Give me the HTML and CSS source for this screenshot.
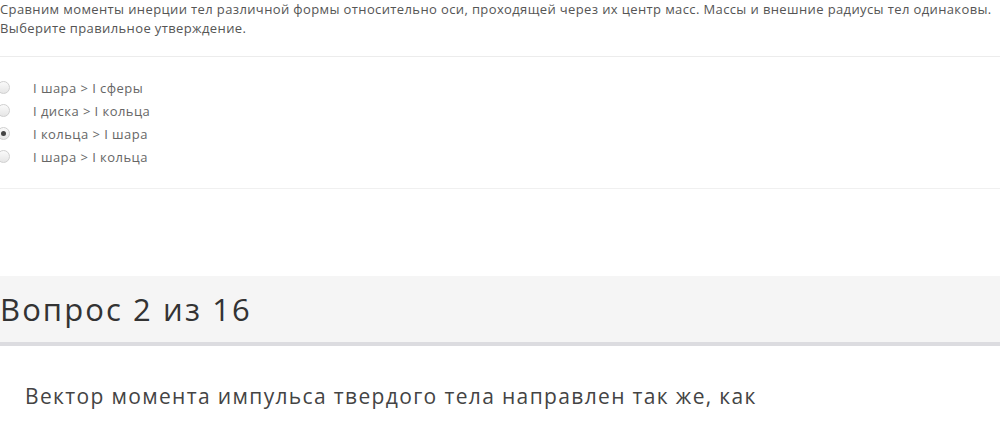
FILE: index.html
```html
<!DOCTYPE html>
<html lang="ru">
<head>
<meta charset="utf-8">
<link rel="stylesheet" href="styles.css">
</head>
<body>
<section class="question">
  <p class="qtext">Сравним моменты инерции тел различной формы относительно оси, проходящей через их центр масс. Массы и внешние радиусы тел одинаковы. Выберите правильное утверждение.</p>
  <div class="answers">
    <label class="option"><span class="radio"></span><span class="otext">I шара &gt; I сферы</span></label>
    <label class="option"><span class="radio"></span><span class="otext">I диска &gt; I кольца</span></label>
    <label class="option"><span class="radio checked"></span><span class="otext">I кольца &gt; I шара</span></label>
    <label class="option"><span class="radio"></span><span class="otext">I шара &gt; I кольца</span></label>
  </div>
</section>
<header class="qhead">
  <h2 class="qtitle">Вопрос 2 из 16</h2>
</header>
<section class="question2">
  <p class="qtext2">Вектор момента импульса твердого тела направлен так же, как</p>
</section>
</body>
</html>
```
FILE: styles.css
```css
html, body {
  margin: 0;
  padding: 0;
  background: #fff;
  overflow: hidden;
}
body {
  font-family: "Open Sans", "Liberation Sans", sans-serif;
  color: #555;
  width: 1000px;
  height: 425px;
}
.question {
  display: flex;
  flex-direction: column;
}
.qtext {
  margin: 0;
  font-size: 13px;
  line-height: 19px;
  letter-spacing: 0.38px;
  padding-bottom: 18px;
  border-bottom: 1px solid #ececec;
}
.answers {
  display: flex;
  flex-direction: column;
  padding: 19px 0 20px;
  border-bottom: 1px solid #f0f0f0;
}
.option {
  display: flex;
  align-items: center;
  height: 23px;
  font-size: 13px;
  letter-spacing: 0.45px;
  color: #666;
}
.radio {
  width: 11px;
  height: 11px;
  margin-left: -3px;
  margin-right: 23px;
  border-radius: 50%;
  border: 1px solid #d0d0d0;
  background: linear-gradient(#fafafa, #e6e6e6);
  display: flex;
  align-items: center;
  justify-content: center;
}
.radio.checked::after {
  content: "";
  width: 5px;
  height: 5px;
  border-radius: 50%;
  background: #444;
}
.qhead {
  margin-top: 87px;
  height: 66px;
  background: #f5f5f5;
  border-bottom: 4px solid #dcdce0;
  display: flex;
  align-items: center;
}
.qtitle {
  margin: 0;
  font-weight: 400;
  font-size: 31px;
  letter-spacing: 2.1px;
  color: #333;
  line-height: 1;
}
.question2 {
  padding-top: 36px;
  padding-left: 25px;
}
.qtext2 {
  margin: 0;
  font-size: 21px;
  line-height: 28px;
  letter-spacing: 1.35px;
  color: #444;
}
```
